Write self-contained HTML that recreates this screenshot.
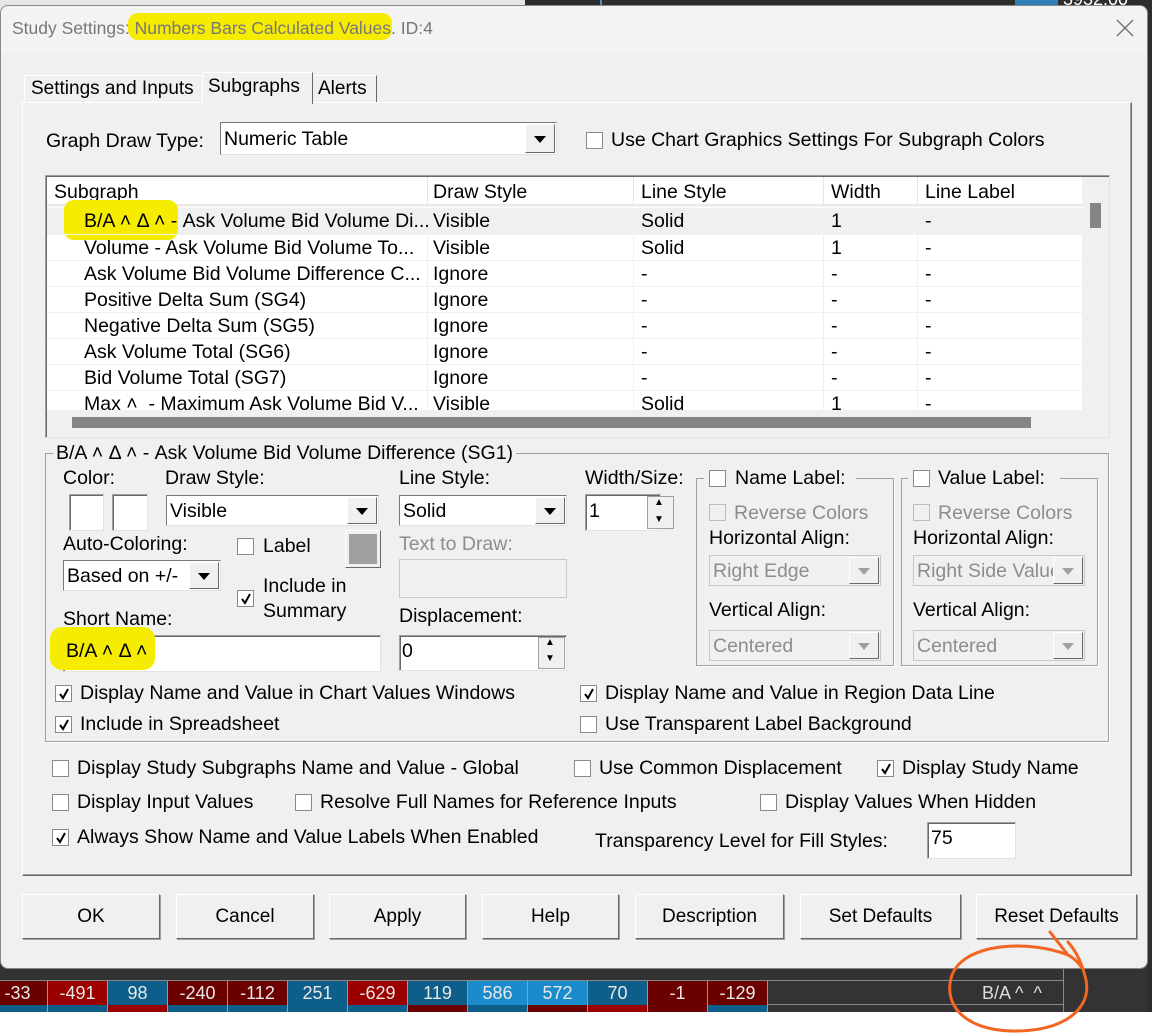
<!DOCTYPE html>
<html><head><meta charset="utf-8"><style>
*{box-sizing:border-box;margin:0;padding:0}
body{width:1152px;height:1036px;overflow:hidden;background:#fff;position:relative;font-family:"Liberation Sans",Arial,sans-serif;font-size:19.5px;color:#000}
.a{position:absolute;white-space:nowrap;line-height:22px}
.box{position:absolute;background:#fff;border:1px solid #a0a0a0;border-right-color:#e3e3e3;border-bottom-color:#e3e3e3;box-shadow:inset 1px 1px 0 #696969}
.cb{position:absolute;width:17px;height:17px;background:#fff;border:1px solid #8a8a8a}
.cb.dis{background:#f0f0f0;border-color:#bdbdbd}
.cb svg{position:absolute;left:2px;top:2px}
.sel{position:absolute;background:#fff;border:1px solid #7a7a7a;border-right-color:#e3e3e3;border-bottom-color:#e3e3e3}
.sel .t{position:absolute;left:3px;top:50%;transform:translateY(-50%);line-height:22px}
.sel .arr{position:absolute;right:1px;top:1px;bottom:1px;width:30px;background:#f0f0f0;border:1px solid #fff;border-right-color:#696969;border-bottom-color:#696969}
.sel .arr:after{content:"";position:absolute;left:50%;top:50%;margin-left:-6px;margin-top:-3px;border-left:6px solid transparent;border-right:6px solid transparent;border-top:7px solid #000}
.sel.dis{background:#f0f0f0;border-color:#c8c8c8}
.sel.dis .t{color:#8d8d8d}
.sel.dis .arr:after{border-top-color:#a0a0a0}
.btn{position:absolute;top:894px;height:45px;background:#f0f0f0;border:1px solid #fff;border-right-color:#696969;border-bottom-color:#696969;box-shadow:1px 1px 0 #a0a0a0;text-align:center;line-height:43px;font-size:19px}
.gray{color:#8d8d8d}
.row{position:absolute;left:47px;width:1035px;height:26px}
.row span{position:absolute;top:2px;line-height:22px;white-space:nowrap}
.cell{position:absolute;top:981px;height:24px;width:60px;color:#e8e8e8;text-align:center;font-size:18px;line-height:24px;border-right:1px solid #999}
.cell2{position:absolute;top:1005px;height:7px;width:60px;border-right:1px solid #999}
</style></head><body>
<!-- background -->
<div style="position:absolute;left:0;top:0;width:525px;height:20px;background:#e6e6e6"></div>
<div style="position:absolute;left:525px;top:0;width:627px;height:20px;background:#2d2d2d"></div>
<div style="position:absolute;left:600px;top:0;width:2px;height:8px;background:#4a90c0"></div>
<div style="position:absolute;left:1015px;top:0;width:43px;height:5px;background:#2f7fb5"></div>
<div class="a" style="left:1063px;top:-12px;color:#fff;font-size:18px">3932.00</div>
<div style="position:absolute;left:0;top:960px;width:1152px;height:52px;background:#333"></div>
<div style="position:absolute;left:1148px;top:0;width:4px;height:1012px;background:#2d2d2d"></div>
<!-- bottom cells -->
<div class="cell" style="left:-12px;background:#6b0000">-33</div>
<div class="cell" style="left:48px;background:#9a0000">-491</div>
<div class="cell" style="left:108px;background:#0d5f8a">98</div>
<div class="cell" style="left:168px;background:#6b0000">-240</div>
<div class="cell" style="left:228px;background:#6b0000">-112</div>
<div class="cell" style="left:288px;background:#0d5f8a">251</div>
<div class="cell" style="left:348px;background:#9a0000">-629</div>
<div class="cell" style="left:408px;background:#0d5f8a">119</div>
<div class="cell" style="left:468px;background:#1a8ccc">586</div>
<div class="cell" style="left:528px;background:#1a8ccc">572</div>
<div class="cell" style="left:588px;background:#0d5f8a">70</div>
<div class="cell" style="left:648px;background:#6b0000">-1</div>
<div class="cell" style="left:708px;background:#6b0000">-129</div>
<div class="cell2" style="left:-12px;background:#0d5f8a"></div>
<div class="cell2" style="left:48px;background:#0d5f8a"></div>
<div class="cell2" style="left:108px;background:#9a0000"></div>
<div class="cell2" style="left:168px;background:#0d5f8a"></div>
<div class="cell2" style="left:228px;background:#0d5f8a"></div>
<div class="cell2" style="left:288px;background:#0d5f8a"></div>
<div class="cell2" style="left:348px;background:#0d5f8a"></div>
<div class="cell2" style="left:408px;background:#6b0000"></div>
<div class="cell2" style="left:468px;background:#0d5f8a"></div>
<div class="cell2" style="left:528px;background:#6b0000"></div>
<div class="cell2" style="left:588px;background:#9a0000"></div>
<div class="cell2" style="left:648px;background:#6b0000"></div>
<div class="cell2" style="left:708px;background:#0d5f8a"></div>
<div style="position:absolute;left:0;top:980px;width:1063px;height:1px;background:#888"></div>
<div style="position:absolute;left:768px;top:1004px;width:295px;height:1px;background:#888"></div>
<div style="position:absolute;left:1063px;top:960px;width:1px;height:52px;background:#888"></div>
<div class="a" style="left:982px;top:982px;color:#ddd;font-size:18px">B/A ^&nbsp;&nbsp;^</div>

<!-- dialog -->
<div style="position:absolute;left:0;top:5px;width:1148px;height:964px;background:#f0f0f0;border-radius:8px;border:1px solid #888"></div>
<div style="position:absolute;left:1px;top:6px;width:1146px;height:48px;background:#f3f3f3;border-radius:8px 8px 0 0"></div>
<div style="position:absolute;left:128px;top:13px;width:264px;height:27px;background:#f5ec00;border-radius:10px"></div>
<div class="a" style="left:12px;top:17px;color:#777;font-size:17.5px">Study Settings: Numbers Bars Calculated Values. ID:4</div>
<svg style="position:absolute;left:1116px;top:19px" width="18" height="18"><path d="M1 1L17 17M17 1L1 17" stroke="#777" stroke-width="1.5"/></svg>

<!-- tabs -->
<div style="position:absolute;left:24px;top:75px;width:179px;height:28px;border:1px solid #fff;border-right-color:#a0a0a0;border-bottom:none"></div>
<div class="a" style="left:31px;top:78px;font-size:19px">Settings and Inputs</div>
<div style="position:absolute;left:312px;top:75px;width:65px;height:28px;border:1px solid #fff;border-right-color:#696969;border-bottom:none"></div>
<div class="a" style="left:318px;top:78px;font-size:19px">Alerts</div>
<!-- panel -->
<div style="position:absolute;left:22px;top:102px;width:1110px;height:774px;border:1px solid #fff;border-right-color:#696969;border-bottom-color:#696969;box-shadow:inset -1px -1px 0 #a0a0a0"></div>
<div style="position:absolute;left:202px;top:72px;width:111px;height:32px;background:#f0f0f0;border:1px solid #fff;border-right-color:#696969;border-bottom:none"></div>
<div class="a" style="left:208px;top:76px;font-size:19px">Subgraphs</div>

<div class="a" style="left:46px;top:130px">Graph Draw Type:</div>
<div class="sel" style="left:220px;top:122px;width:337px;height:33px"><span class="t">Numeric Table</span><span class="arr"></span></div>
<div class="cb" style="left:586px;top:132px"></div>
<div class="a" style="left:611px;top:129px">Use Chart Graphics Settings For Subgraph Colors</div>

<!-- list -->
<div class="box" style="left:45px;top:175px;width:1065px;height:263px;background:#f0f0f0"></div>
<div style="position:absolute;left:47px;top:207px;width:1035px;height:203px;background:#fff"></div>
<div style="position:absolute;left:47px;top:177px;width:1035px;height:28px;background:#fff;border-bottom:1px solid #e5e5e5"></div>
<div style="position:absolute;left:427px;top:177px;width:1px;height:28px;background:#e5e5e5"></div>
<div style="position:absolute;left:633px;top:177px;width:1px;height:28px;background:#e5e5e5"></div>
<div style="position:absolute;left:823px;top:177px;width:1px;height:28px;background:#e5e5e5"></div>
<div style="position:absolute;left:917px;top:177px;width:1px;height:28px;background:#e5e5e5"></div>
<div class="a" style="left:54px;top:181px">Subgraph</div>
<div class="a" style="left:433px;top:181px">Draw Style</div>
<div class="a" style="left:641px;top:181px">Line Style</div>
<div class="a" style="left:831px;top:181px">Width</div>
<div class="a" style="left:925px;top:181px">Line Label</div>
<div class="row" style="top:208px;background:#f0f0f0"></div>
<div style="position:absolute;left:64px;top:200px;width:114px;height:40px;background:#f5ec00;border-radius:10px"></div>
<div class="row" style="top:208px"><span style="left:37px">B/A ˄ Δ ˄ - Ask Volume Bid Volume Di...</span><span style="left:386px">Visible</span><span style="left:594px">Solid</span><span style="left:784px">1</span><span style="left:878px">-</span></div>
<div class="row" style="top:234px;border-top:1px solid #f0f0f0"><span style="left:37px">Volume - Ask Volume Bid Volume To...</span><span style="left:386px">Visible</span><span style="left:594px">Solid</span><span style="left:784px">1</span><span style="left:878px">-</span></div>
<div class="row" style="top:260px;border-top:1px solid #f0f0f0"><span style="left:37px">Ask Volume Bid Volume Difference C...</span><span style="left:386px">Ignore</span><span style="left:594px">-</span><span style="left:784px">-</span><span style="left:878px">-</span></div>
<div class="row" style="top:286px;border-top:1px solid #f0f0f0"><span style="left:37px">Positive Delta Sum (SG4)</span><span style="left:386px">Ignore</span><span style="left:594px">-</span><span style="left:784px">-</span><span style="left:878px">-</span></div>
<div class="row" style="top:312px;border-top:1px solid #f0f0f0"><span style="left:37px">Negative Delta Sum (SG5)</span><span style="left:386px">Ignore</span><span style="left:594px">-</span><span style="left:784px">-</span><span style="left:878px">-</span></div>
<div class="row" style="top:338px;border-top:1px solid #f0f0f0"><span style="left:37px">Ask Volume Total (SG6)</span><span style="left:386px">Ignore</span><span style="left:594px">-</span><span style="left:784px">-</span><span style="left:878px">-</span></div>
<div class="row" style="top:364px;border-top:1px solid #f0f0f0"><span style="left:37px">Bid Volume Total (SG7)</span><span style="left:386px">Ignore</span><span style="left:594px">-</span><span style="left:784px">-</span><span style="left:878px">-</span></div>
<div class="row" style="top:390px;height:20px;overflow:hidden;border-top:1px solid #f0f0f0"><span style="left:37px">Max ˄&nbsp; - Maximum Ask Volume Bid V...</span><span style="left:386px">Visible</span><span style="left:594px">Solid</span><span style="left:784px">1</span><span style="left:878px">-</span></div>
<div style="position:absolute;left:427px;top:234px;width:1px;height:176px;background:#f0f0f0"></div>
<div style="position:absolute;left:633px;top:234px;width:1px;height:176px;background:#f0f0f0"></div>
<div style="position:absolute;left:823px;top:234px;width:1px;height:176px;background:#f0f0f0"></div>
<div style="position:absolute;left:917px;top:234px;width:1px;height:176px;background:#f0f0f0"></div>
<div style="position:absolute;left:1090px;top:203px;width:11px;height:25px;background:#858585"></div>
<div style="position:absolute;left:72px;top:417px;width:959px;height:11px;background:#858585"></div>

<!-- group SG1 -->
<div style="position:absolute;left:45px;top:453px;width:1064px;height:289px;border:1px solid #a0a0a0;box-shadow:1px 1px 0 #fff"></div>
<div class="a" style="left:53px;top:442px;background:#f0f0f0;padding:0 3px">B/A ˄ Δ ˄ - Ask Volume Bid Volume Difference (SG1)</div>

<div class="a" style="left:63px;top:467px">Color:</div>
<div class="box" style="left:69px;top:494px;width:35px;height:37px"></div>
<div class="box" style="left:112px;top:494px;width:36px;height:37px"></div>
<div class="a" style="left:165px;top:467px">Draw Style:</div>
<div class="sel" style="left:166px;top:495px;width:213px;height:31px"><span class="t">Visible</span><span class="arr"></span></div>
<div class="a" style="left:63px;top:533px">Auto-Coloring:</div>
<div class="sel" style="left:63px;top:560px;width:158px;height:31px"><span class="t">Based on +/-</span><span class="arr"></span></div>
<div class="cb" style="left:237px;top:538px"></div>
<div class="a" style="left:263px;top:535px">Label</div>
<div style="position:absolute;left:345px;top:530px;width:36px;height:38px;background:#f0f0f0;border:1px solid #fff;border-right-color:#696969;border-bottom-color:#696969"><div style="position:absolute;left:3px;top:3px;right:3px;bottom:3px;background:#a0a0a0"></div></div>
<div class="cb" style="left:237px;top:590px"><svg width="12" height="12"><path d="M2 6L5 10L10 1" stroke="#000" stroke-width="2" fill="none"/></svg></div>
<div class="a" style="left:263px;top:575px">Include in</div>
<div class="a" style="left:263px;top:600px">Summary</div>
<div class="a" style="left:63px;top:608px">Short Name:</div>
<div class="box" style="left:63px;top:635px;width:318px;height:37px"></div>
<div style="position:absolute;left:50px;top:627px;width:105px;height:43px;background:#f5ec00;border-radius:12px"></div>
<div class="a" style="left:66px;top:640px">B/A ˄ Δ ˄</div>

<div class="a" style="left:399px;top:467px">Line Style:</div>
<div class="sel" style="left:399px;top:495px;width:168px;height:31px"><span class="t">Solid</span><span class="arr"></span></div>
<div class="a gray" style="left:399px;top:533px">Text to Draw:</div>
<div style="position:absolute;left:399px;top:559px;width:168px;height:39px;border:1px solid #c8c8c8;background:#f0f0f0"></div>
<div class="a" style="left:399px;top:605px">Displacement:</div>
<div class="box" style="left:399px;top:635px;width:168px;height:36px"></div>
<div class="a" style="left:402px;top:640px">0</div>
<div style="position:absolute;left:538px;top:637px;width:27px;height:32px;background:#f0f0f0;border:1px solid #a0a0a0"></div>
<div class="a" style="left:545px;top:632px;font-size:10px">▲</div>
<div class="a" style="left:545px;top:648px;font-size:10px">▼</div>

<div class="a" style="left:585px;top:467px">Width/Size:</div>
<div class="box" style="left:585px;top:494px;width:76px;height:37px"></div>
<div class="a" style="left:589px;top:500px">1</div>
<div style="position:absolute;left:647px;top:496px;width:27px;height:33px;background:#f0f0f0;border:1px solid #a0a0a0"></div>
<div class="a" style="left:654px;top:492px;font-size:10px">▲</div>
<div class="a" style="left:654px;top:509px;font-size:10px">▼</div>

<!-- name label group -->
<div style="position:absolute;left:696px;top:478px;width:198px;height:188px;border:1px solid #a0a0a0;box-shadow:1px 1px 0 #fff"></div>
<div style="position:absolute;left:704px;top:466px;width:152px;height:24px;background:#f0f0f0"></div>
<div class="cb" style="left:709px;top:470px"></div>
<div class="a" style="left:735px;top:467px">Name Label:</div>
<div class="cb dis" style="left:709px;top:504px"></div>
<div class="a gray" style="left:734px;top:502px">Reverse Colors</div>
<div class="a" style="left:709px;top:527px">Horizontal Align:</div>
<div class="sel dis" style="left:709px;top:555px;width:172px;height:31px"><span class="t">Right Edge</span><span class="arr"></span></div>
<div class="a" style="left:709px;top:599px">Vertical Align:</div>
<div class="sel dis" style="left:709px;top:630px;width:172px;height:31px"><span class="t">Centered</span><span class="arr"></span></div>
<!-- value label group -->
<div style="position:absolute;left:901px;top:478px;width:197px;height:188px;border:1px solid #a0a0a0;box-shadow:1px 1px 0 #fff"></div>
<div style="position:absolute;left:908px;top:466px;width:152px;height:24px;background:#f0f0f0"></div>
<div class="cb" style="left:913px;top:470px"></div>
<div class="a" style="left:938px;top:467px">Value Label:</div>
<div class="cb dis" style="left:913px;top:504px"></div>
<div class="a gray" style="left:938px;top:502px">Reverse Colors</div>
<div class="a" style="left:913px;top:527px">Horizontal Align:</div>
<div class="sel dis" style="left:913px;top:555px;width:172px;height:31px;overflow:hidden"><span class="t">Right Side Value</span><span class="arr"></span></div>
<div class="a" style="left:913px;top:599px">Vertical Align:</div>
<div class="sel dis" style="left:913px;top:630px;width:172px;height:31px"><span class="t">Centered</span><span class="arr"></span></div>

<div class="cb" style="left:55px;top:685px"><svg width="12" height="12"><path d="M2 6L5 10L10 1" stroke="#000" stroke-width="2" fill="none"/></svg></div>
<div class="a" style="left:80px;top:682px">Display Name and Value in Chart Values Windows</div>
<div class="cb" style="left:55px;top:716px"><svg width="12" height="12"><path d="M2 6L5 10L10 1" stroke="#000" stroke-width="2" fill="none"/></svg></div>
<div class="a" style="left:80px;top:713px">Include in Spreadsheet</div>
<div class="cb" style="left:580px;top:685px"><svg width="12" height="12"><path d="M2 6L5 10L10 1" stroke="#000" stroke-width="2" fill="none"/></svg></div>
<div class="a" style="left:605px;top:682px">Display Name and Value in Region Data Line</div>
<div class="cb" style="left:580px;top:716px"></div>
<div class="a" style="left:605px;top:713px">Use Transparent Label Background</div>

<!-- bottom options -->
<div class="cb" style="left:52px;top:760px"></div>
<div class="a" style="left:77px;top:757px">Display Study Subgraphs Name and Value - Global</div>
<div class="cb" style="left:574px;top:760px"></div>
<div class="a" style="left:599px;top:757px">Use Common Displacement</div>
<div class="cb" style="left:877px;top:760px"><svg width="12" height="12"><path d="M2 6L5 10L10 1" stroke="#000" stroke-width="2" fill="none"/></svg></div>
<div class="a" style="left:902px;top:757px">Display Study Name</div>
<div class="cb" style="left:52px;top:794px"></div>
<div class="a" style="left:77px;top:791px">Display Input Values</div>
<div class="cb" style="left:295px;top:794px"></div>
<div class="a" style="left:320px;top:791px">Resolve Full Names for Reference Inputs</div>
<div class="cb" style="left:760px;top:794px"></div>
<div class="a" style="left:785px;top:791px">Display Values When Hidden</div>
<div class="cb" style="left:52px;top:829px"><svg width="12" height="12"><path d="M2 6L5 10L10 1" stroke="#000" stroke-width="2" fill="none"/></svg></div>
<div class="a" style="left:77px;top:826px">Always Show Name and Value Labels When Enabled</div>
<div class="a" style="left:595px;top:830px">Transparency Level for Fill Styles:</div>
<div class="box" style="left:927px;top:822px;width:89px;height:37px"></div>
<div class="a" style="left:931px;top:827px">75</div>

<!-- buttons -->
<div class="btn" style="left:22px;width:138px">OK</div>
<div class="btn" style="left:176px;width:138px">Cancel</div>
<div class="btn" style="left:329px;width:137px">Apply</div>
<div class="btn" style="left:482px;width:137px">Help</div>
<div class="btn" style="left:635px;width:149px">Description</div>
<div class="btn" style="left:800px;width:161px">Set Defaults</div>
<div class="btn" style="left:976px;width:161px">Reset Defaults</div>

<!-- orange annotation -->
<svg style="position:absolute;left:0;top:0" width="1152" height="1036"><path d="M1068 955 C1030 940 965 942 952 975 C942 1005 965 1030 1012 1031 C1062 1032 1092 1010 1086 980 C1082 962 1075 950 1068 942 M1068 955 C1074 958 1078 962 1082 968 M1068 955 L1050 932" stroke="#f26522" stroke-width="3" fill="none" stroke-linecap="round"/></svg>
</body></html>
